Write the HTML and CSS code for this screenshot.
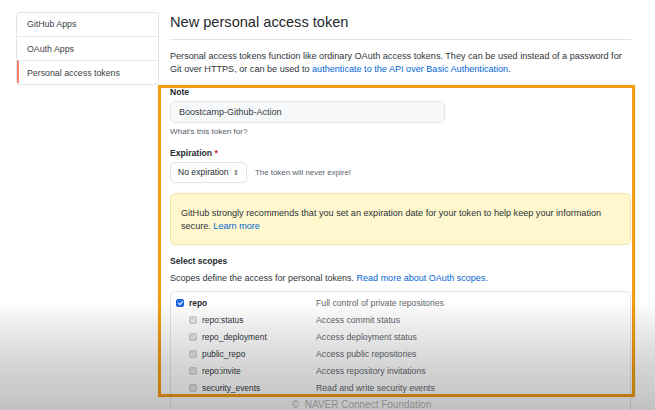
FILE: index.html
```html
<!DOCTYPE html>
<html>
<head>
<meta charset="utf-8">
<link rel="stylesheet" href="styles.css">
</head>
<body>
<div class="layout">
  <nav class="sidebar">
    <div class="side-item">GitHub Apps</div>
    <div class="side-item">OAuth Apps</div>
    <div class="side-item active">Personal access tokens</div>
  </nav>
  <main class="main">
    <h2 class="title">New personal access token</h2>
    <p class="intro">Personal access tokens function like ordinary OAuth access tokens. They can be used instead of a password for Git over HTTPS, or can be used to <a class="link">authenticate to the API over Basic Authentication</a>.</p>

    <div class="label">Note</div>
    <div class="input">Boostcamp-Github-Action</div>
    <div class="hint">What's this token for?</div>

    <div class="label label-exp">Expiration <span class="req">*</span></div>
    <div class="exp-row">
      <div class="select">No expiration <span class="arrows">&#8661;</span></div>
      <span class="hint">The token will never expire!</span>
    </div>

    <div class="flash">GitHub strongly recommends that you set an expiration date for your token to help keep your information secure. <a class="link">Learn more</a></div>

    <div class="label label-scopes">Select scopes</div>
    <div class="scopes-note">Scopes define the access for personal tokens. <a class="link">Read more about OAuth scopes.</a></div>

    <div class="scopes">
      <div class="row">
        <span class="name"><span class="cb on"></span><b>repo</b></span>
        <span class="desc">Full control of private repositories</span>
      </div>
      <div class="row sub">
        <span class="name"><span class="cb off"></span>repo:status</span>
        <span class="desc">Access commit status</span>
      </div>
      <div class="row sub">
        <span class="name"><span class="cb off"></span>repo_deployment</span>
        <span class="desc">Access deployment status</span>
      </div>
      <div class="row sub">
        <span class="name"><span class="cb off"></span>public_repo</span>
        <span class="desc">Access public repositories</span>
      </div>
      <div class="row sub">
        <span class="name"><span class="cb off"></span>repo:invite</span>
        <span class="desc">Access repository invitations</span>
      </div>
      <div class="row sub">
        <span class="name"><span class="cb off"></span>security_events</span>
        <span class="desc">Read and write security events</span>
      </div>
    </div>
  </main>
</div>
<div class="highlight"></div>
<div class="shade"></div>
<div class="credit">&copy;&nbsp; NAVER Connect Foundation</div>
</body>
</html>
```
FILE: styles.css
```css
html, body {
  margin: 0;
  padding: 0;
  height: 410px;
  overflow: hidden;
  background: #fff;
}
body {
  font-family: "Liberation Sans", Arial, sans-serif;
  color: #24292e;
  padding-top: 12px;
  box-sizing: border-box;
  position: relative;
}
.layout {
  display: flex;
  padding-left: 16px;
  gap: 11px;
}
.sidebar {
  width: 143px;
  flex: none;
  align-self: flex-start;
  border: 1px solid #e1e4e8;
  border-radius: 4px;
  box-sizing: border-box;
  overflow: hidden;
}
.side-item {
  height: 24px;
  line-height: 24px;
  font-size: 8.8px;
  color: #3a3f45;
  padding-left: 10px;
  border-top: 1px solid #e8eaed;
  box-sizing: border-box;
}
.side-item:first-child { border-top: none; height: 23px; line-height: 23px; }
.side-item.active {
  border-left: 2px solid #f9826c;
  padding-left: 8px;
}
.main {
  width: 461px;
  flex: none;
}
.title {
  margin: 0;
  font-size: 14.6px;
  font-weight: normal;
  line-height: 20px;
  padding-bottom: 7px;
  border-bottom: 1px solid #e1e4e8;
  color: #24292e;
}
.intro {
  margin: 10px 0 0;
  font-size: 9.1px;
  line-height: 13px;
  color: #30353a;
}
.link { color: #0366d6; }
.label {
  font-weight: bold;
  font-size: 8.6px;
  line-height: 13px;
  margin-top: 9.5px;
}
.req { color: #cb2431; }
.input {
  margin-top: 2.5px;
  width: 275px;
  height: 22px;
  box-sizing: border-box;
  background: #f6f8fa;
  border: 1px solid #e1e4e8;
  border-radius: 5px;
  font-size: 9px;
  line-height: 20px;
  padding-left: 8px;
  color: #33383d;
}
.hint {
  font-size: 8.1px;
  line-height: 11px;
  color: #586069;
  margin-top: 2.5px;
}
.label-exp { margin-top: 10px; }
.exp-row {
  display: flex;
  align-items: center;
  gap: 8px;
  margin-top: 2.5px;
}
.exp-row .hint { margin-top: 0; font-size: 7.9px; }
.select {
  width: 77px;
  height: 21px;
  box-sizing: border-box;
  border: 1px solid #e1e4e8;
  border-radius: 5px;
  font-size: 8.6px;
  line-height: 19px;
  padding-left: 7px;
  color: #24292e;
  background: #fff;
}
.arrows { font-size: 7px; margin-left: 2px; color: #444; }
.flash {
  margin-top: 10px;
  height: 52px;
  box-sizing: border-box;
  background: #fff8cf;
  border: 1px solid #f1e6a8;
  border-radius: 5px;
  padding: 12.5px 10px 0;
  font-size: 9.1px;
  line-height: 13px;
  color: #2c3136;
}
.label-scopes { margin-top: 9.5px; }
.scopes-note {
  margin-top: 4px;
  font-size: 9px;
  line-height: 13px;
  color: #30353a;
}
.scopes {
  margin-top: 6.5px;
  border: 1px solid #e1e4e8;
  border-radius: 5px;
  padding-top: 2px;
  height: 220px;
}
.row {
  display: grid;
  grid-template-columns: 140px 1fr;
  height: 17px;
  align-items: center;
  font-size: 8.4px;
  padding-left: 5px;
}
.row .name { display: flex; align-items: center; gap: 5px; color: #33383d; }
.row.sub .name { padding-left: 13px; }
.row b { color: #24292e; }
.desc { color: #5f666d; font-size: 8.7px; }
.cb {
  width: 8px;
  height: 8px;
  border-radius: 2px;
  box-sizing: border-box;
  position: relative;
  flex: none;
}
.cb.on { background: #1f6feb; border: 1px solid #1a5fd0; }
.cb.off { background: #d9dcdf; border: 1px solid #cdd0d3; }
.cb::after {
  content: "";
  position: absolute;
  left: 2px;
  top: 0px;
  width: 2px;
  height: 4px;
  border: solid #fff;
  border-width: 0 1.2px 1.2px 0;
  transform: rotate(45deg);
}
.cb.off::after { border-color: #f3f4f5; }
.highlight {
  position: absolute;
  left: 158px;
  top: 85px;
  width: 477px;
  height: 312px;
  box-sizing: border-box;
  border: 3px solid #f29d16;
  box-shadow: 0 0 1px rgba(242,157,22,0.6);
  pointer-events: none;
}
.shade {
  position: absolute;
  left: 0;
  right: 0;
  top: 300px;
  height: 110px;
  background: linear-gradient(to bottom, rgba(0,0,0,0) 0%, rgba(0,0,0,0.08) 25%, rgba(0,0,0,0.17) 60%, rgba(0,0,0,0.24) 100%);
  pointer-events: none;
}
.credit {
  position: absolute;
  left: 0;
  right: 0;
  top: 399px;
  text-align: center;
  font-size: 10px;
  line-height: 12px;
  color: #8c8c8c;
  padding-left: 68px;
}
```
